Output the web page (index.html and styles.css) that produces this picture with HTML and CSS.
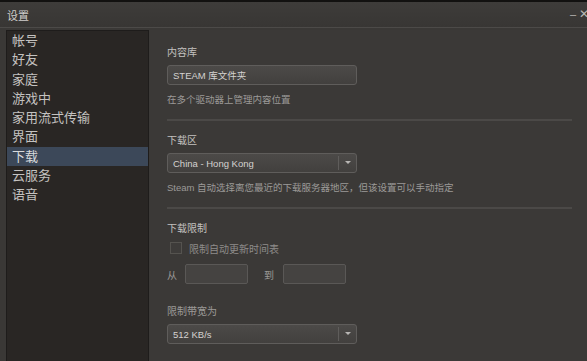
FILE: index.html
```html
<!DOCTYPE html>
<html lang="zh-CN">
<head>
<meta charset="utf-8">
<link rel="stylesheet" href="styles.css">
</head>
<body>
<div class="window">
  <div class="titlebar">
    <span class="title">设置</span>
    <span class="controls"><span class="min">–</span><span class="close">✕</span></span>
  </div>
  <div class="body">
    <ul class="nav">
      <li>帐号</li>
      <li>好友</li>
      <li>家庭</li>
      <li>游戏中</li>
      <li>家用流式传输</li>
      <li>界面</li>
      <li class="active">下载</li>
      <li>云服务</li>
      <li>语音</li>
    </ul>
    <div class="panel">
      <section class="sec sec-first">
        <div class="label">内容库</div>
        <div class="field button">STEAM 库文件夹</div>
        <div class="desc">在多个驱动器上管理内容位置</div>
      </section>
      <section class="sec">
        <div class="label">下载区</div>
        <div class="field select"><span class="val">China - Hong Kong</span><span class="arrow"></span></div>
        <div class="desc">Steam 自动选择离您最近的下载服务器地区，但该设置可以手动指定</div>
      </section>
      <section class="sec sec-last">
        <div class="label">下载限制</div>
        <div class="check"><span class="box"></span><span class="check-label">限制自动更新时间表</span></div>
        <div class="times">
          <span class="tl">从</span><span class="tbox"></span>
          <span class="tl tl2">到</span><span class="tbox"></span>
        </div>
        <div class="label label-bw">限制带宽为</div>
        <div class="field select"><span class="val">512 KB/s</span><span class="arrow"></span></div>
      </section>
    </div>
  </div>
</div>
</body>
</html>
```
FILE: styles.css
```css
* { box-sizing: border-box; }
html, body { margin: 0; padding: 0; }
body {
  width: 587px;
  height: 361px;
  overflow: hidden;
  background: #3a3836;
  font-family: "Liberation Sans", "Noto Sans CJK SC", sans-serif;
}
.window {
  height: 361px;
  border-top: 2px solid #121110;
  display: flex;
  flex-direction: column;
  background: #3a3836;
}
.titlebar {
  height: 26px;
  flex: none;
  display: flex;
  align-items: center;
  justify-content: space-between;
  padding: 0 0 0 7px;
  background: linear-gradient(#3e3c3a, #383634);
  border-bottom: 1px solid #4c4a48;
}
.title {
  font-size: 11px;
  color: #d0cecc;
}
.controls {
  display: flex;
  align-items: center;
  gap: 3px;
  color: #b8b6b4;
  font-size: 12px;
  margin-top: -2px;
}
.min { font-size: 11px; }
.close { font-size: 12px; margin-right: -2px; }
.body {
  flex: 1;
  display: flex;
  padding: 2px 0 0 6px;
}
.nav {
  list-style: none;
  margin: 0;
  padding: 0;
  width: 143px;
  flex: none;
  background: #292624;
  border: 1px solid #1e1c1b;
  border-bottom: none;
  box-shadow: 1px 0 0 #44423f;
}
.nav li {
  height: 19.3px;
  line-height: 17px;
  padding-left: 5px;
  font-size: 13px;
  color: #c4c2c0;
  font-family: "Noto Sans CJK SC", sans-serif;
}
.nav li.active {
  background: #3c4859;
  color: #d8dadc;
}
.panel {
  flex: 1;
  padding: 12px 15px 0 18px;
  background: #3b3937;
}
.sec {
  width: 405px;
  border-bottom: 2px solid #4b4947;
  padding: 12px 0 12px;
}
.sec-first { padding-top: 3px; padding-bottom: 12px; }
.sec-last { border-bottom: none; padding-top: 12px; }
.label {
  font-family: "Noto Sans CJK SC", sans-serif;
  font-size: 10px;
  color: #c4c2c0;
  line-height: 14px;
}
.field {
  margin-top: 6px;
  width: 190px;
  height: 20px;
  border: 1px solid #5f5d5b;
  border-radius: 3px;
  background: linear-gradient(#4c4a48, #42403e);
  color: #d4d2d0;
  font-size: 9.5px;
  display: flex;
  align-items: center;
  padding-left: 5px;
  font-family: "Liberation Sans", "Noto Sans CJK SC", sans-serif;
}
.select { justify-content: space-between; padding-right: 0; }
.arrow {
  width: 18px;
  height: 14px;
  border-left: 1px solid #5f5d5b;
  position: relative;
}
.arrow::after {
  content: "";
  position: absolute;
  left: 6px;
  top: 5px;
  border-left: 3px solid transparent;
  border-right: 3px solid transparent;
  border-top: 3px solid #b8b6b4;
}
.desc {
  margin-top: 8px;
  font-family: "Liberation Sans", "Noto Sans CJK SC", sans-serif;
  font-size: 9.5px;
  color: #9c9a98;
  line-height: 14px;
}
.check {
  margin-top: 6px;
  display: flex;
  align-items: center;
  height: 14px;
  padding-left: 3px;
}
.box {
  width: 12px;
  height: 12px;
  border: 1px solid #55534f;
  background: #3e3c3a;
}
.check-label {
  margin-left: 7px;
  font-family: "Noto Sans CJK SC", sans-serif;
  font-size: 10px;
  color: #8e8c8a;
}
.times {
  margin-top: 9px;
  display: flex;
  align-items: center;
  height: 20px;
}
.tl {
  font-family: "Noto Sans CJK SC", sans-serif;
  font-size: 10px;
  color: #9c9a98;
  width: 18px;
}
.tl2 { width: 19px; margin-left: 16px; }
.tbox {
  width: 63px;
  height: 20px;
  border: 1px solid #5a5856;
  border-radius: 2px;
  background: #454341;
}
.label-bw { margin-top: 20px; color: #9c9a98; }
```
